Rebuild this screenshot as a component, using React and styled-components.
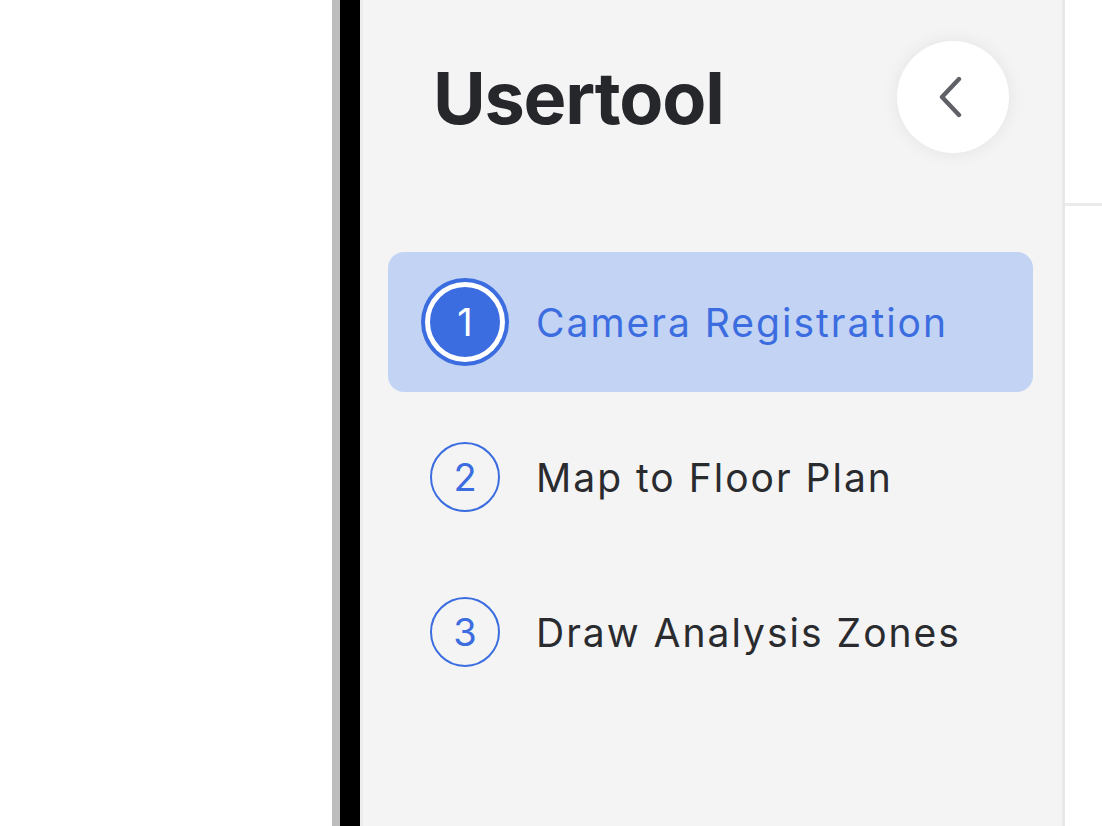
import React from 'react'
import styled, { createGlobalStyle } from 'styled-components'

const steps = [
  { n: 1, label: 'Camera Registration' },
  { n: 2, label: 'Map to Floor Plan' },
  { n: 3, label: 'Draw Analysis Zones' },
]

const App = () => {
  const active = 1
  return (
    <>
      <Global />
      <Page>
        <Blank />
        <Gutter />
        <DarkBar />
        <Sidebar>
          <Header>
            <Title>Usertool</Title>
            <CollapseButton aria-label="Collapse">
              <svg width="26" height="42" viewBox="0 0 26 42" fill="none">
                <polyline
                  points="21,3 4,21 21,39"
                  stroke="#5f6166"
                  strokeWidth="4.4"
                  strokeLinecap="round"
                  strokeLinejoin="round"
                />
              </svg>
            </CollapseButton>
          </Header>
          <StepList>
            {steps.map((s) => (
              <Step key={s.n} $active={s.n === active}>
                <StepNumber $active={s.n === active}>{s.n}</StepNumber>
                <StepLabel $active={s.n === active}>{s.label}</StepLabel>
              </Step>
            ))}
          </StepList>
        </Sidebar>
        <Main>
          <MainHeader />
        </Main>
      </Page>
    </>
  )
}

const Global = createGlobalStyle`
  html, body {
    margin: 0;
    padding: 0;
    background: #fff;
    font-family: Inter, "Noto Sans", sans-serif;
  }
`

const Page = styled.div`
  display: flex;
  height: 826px;
  width: 1102px;
  overflow: hidden;
`

const Blank = styled.div`
  width: 332px;
  background: #fff;
`

const Gutter = styled.div`
  width: 8px;
  background: #bdbdbd;
`

const DarkBar = styled.div`
  width: 20px;
  background: #000;
`

const Sidebar = styled.aside`
  width: 699px;
  background: #f4f4f4;
  border-left: 3px solid #ededed;
  border-right: 3px solid #e8e8e8;
  display: flex;
  flex-direction: column;
`

const Header = styled.div`
  display: flex;
  align-items: center;
  justify-content: space-between;
  padding: 41px 53px 0 70px;
  height: 112px;
`

const Title = styled.h1`
  margin: 0;
  font-size: 72px;
  font-weight: 700;
  color: #26272b;
  letter-spacing: -1.2px;
`

const CollapseButton = styled.button`
  width: 112px;
  height: 112px;
  border-radius: 50%;
  border: none;
  background: #fff;
  box-shadow: 0 0 18px rgba(0, 0, 0, 0.07);
  display: flex;
  align-items: center;
  justify-content: center;
  padding: 0 4px 0 0;
  cursor: pointer;
`

const StepList = styled.div`
  display: flex;
  flex-direction: column;
  gap: 15px;
  padding: 99px 29px 0 25px;
`

const Step = styled.div`
  height: 140px;
  display: flex;
  align-items: center;
  gap: 36px;
  padding-left: 42px;
  border-radius: 16px;
  background: ${(p) => (p.$active ? '#c2d3f4' : 'transparent')};
`

const StepNumber = styled.div`
  width: 70px;
  height: 70px;
  box-sizing: border-box;
  border-radius: 50%;
  border: 2px solid #3b6de0;
  display: flex;
  align-items: center;
  justify-content: center;
  font-size: 38px;
  font-weight: 400;
  color: ${(p) => (p.$active ? '#fff' : '#3b6de0')};
  background: ${(p) => (p.$active ? '#3b6de0' : 'transparent')};
  box-shadow: ${(p) => (p.$active ? '0 0 0 5px #fff, 0 0 0 9px #3b6de0' : 'none')};
`

const StepLabel = styled.span`
  font-size: 39px;
  font-weight: 400;
  letter-spacing: 2px;
  color: ${(p) => (p.$active ? '#3b6de0' : '#2a2b2f')};
`

const Main = styled.main`
  flex: 1;
  background: #fff;
`

const MainHeader = styled.div`
  height: 203px;
  border-bottom: 3px solid #ebebeb;
`

export default App
